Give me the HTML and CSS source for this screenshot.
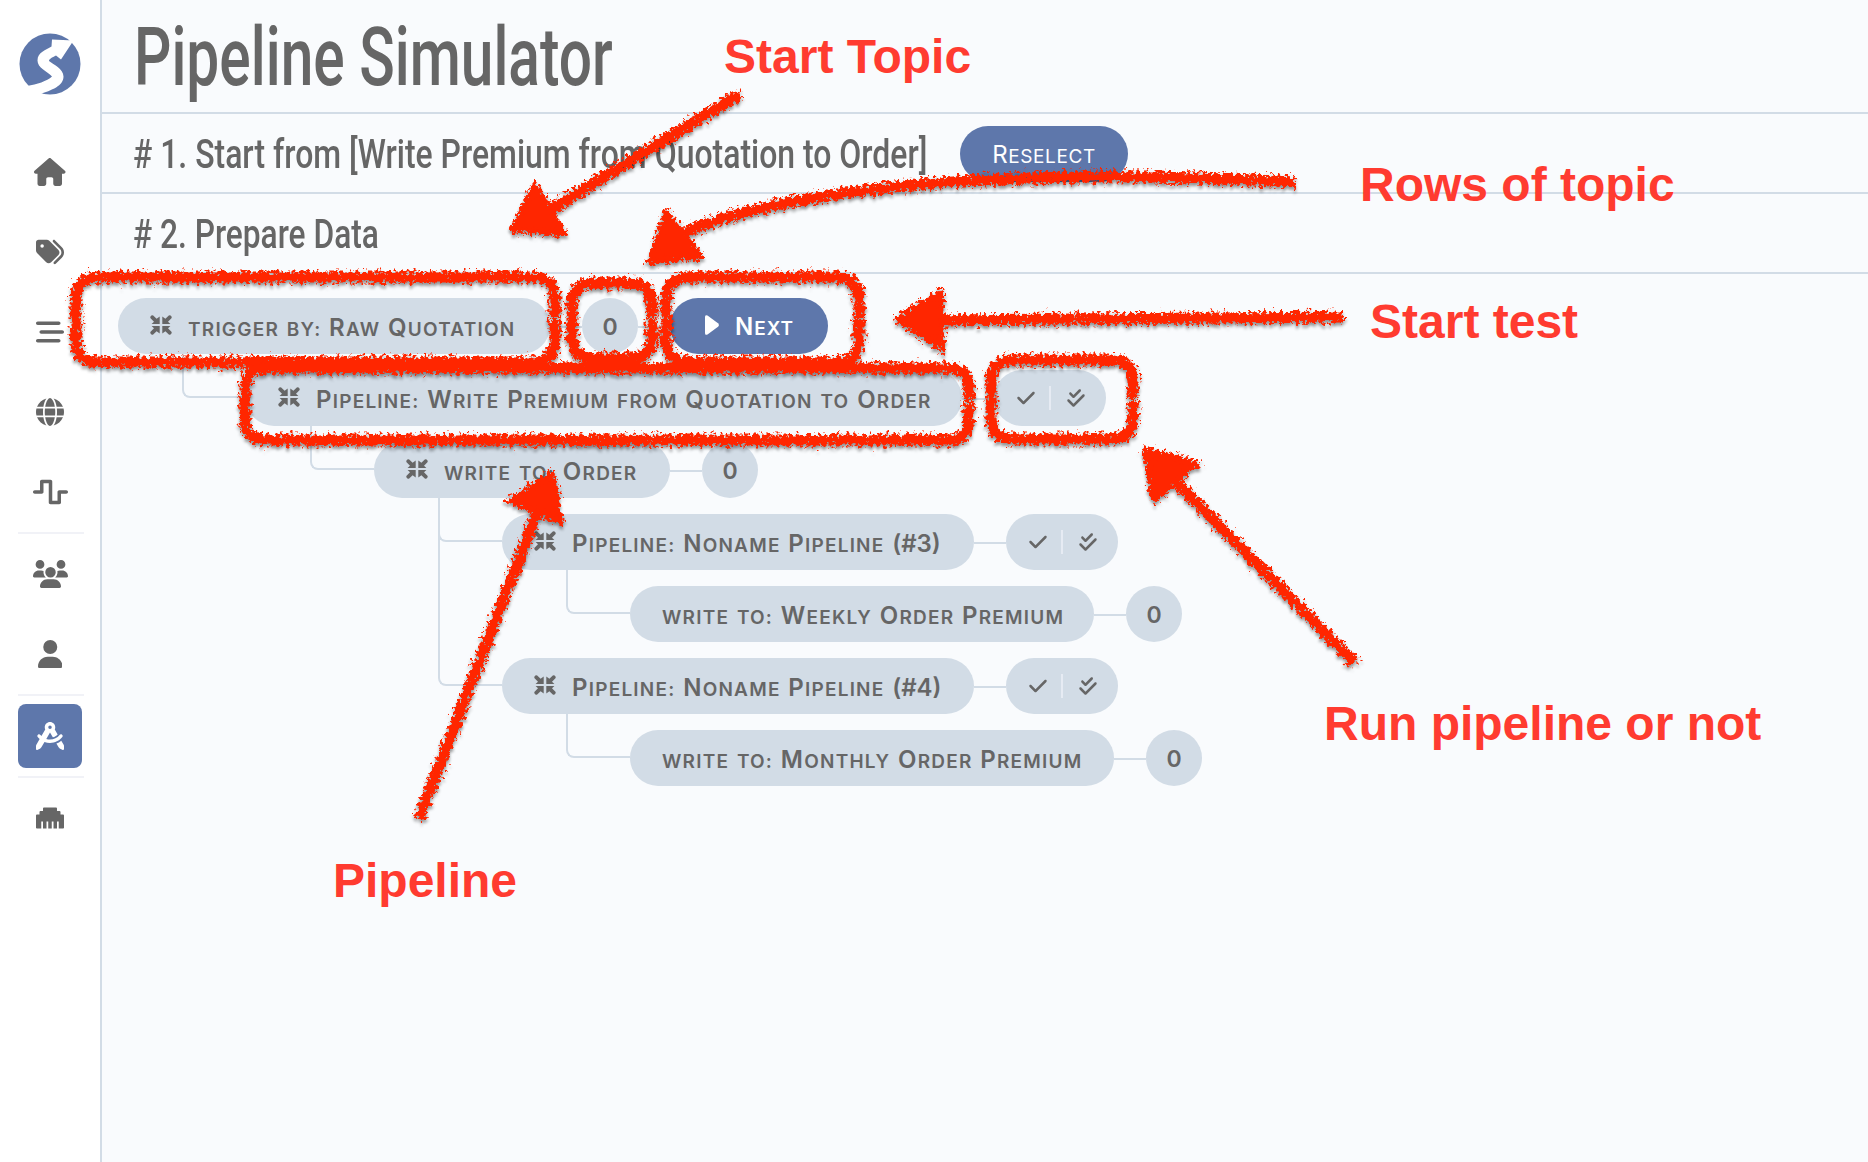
FILE: index.html
```html
<!DOCTYPE html>
<html lang="en">
<head>
<meta charset="utf-8">
<title>Pipeline Simulator</title>
<link rel="stylesheet" href="styles.css">
</head>
<body>
<svg class="defs" aria-hidden="true">
  <symbol id="collapse" viewBox="0 0 22 20">
    <path d="M9.7 1.500V9H1.600L4 6.700 0.800 3.600Q-0.200 2.500 0.700 1.200 1.800-0.200 3.200 0.600L6.600 3.700zM12.300 1.500V9H20.400L18 6.700 21.200 3.600Q22.200 2.500 21.300 1.200 20.200-0.200 18.800 0.600L15.400 3.700zM9.700 18.500V11H1.600L4 13.300 0.800 16.400Q-0.200 17.500 0.700 18.800 1.800 20.200 3.200 19.400L6.600 16.300zM12.300 18.500V11H20.400L18 13.300 21.200 16.400Q22.200 17.500 21.300 18.800 20.200 20.200 18.800 19.400L15.400 16.300z"/>
  </symbol>
  <symbol id="check" viewBox="0 0 448 512">
    <path d="M438.6 105.4c12.5 12.5 12.5 32.8 0 45.3l-256 256c-12.5 12.5-32.8 12.5-45.3 0l-128-128c-12.5-12.5-12.5-32.8 0-45.3s32.8-12.5 45.3 0L160 338.7 393.4 105.4c12.5-12.5 32.8-12.5 45.3 0z"/>
  </symbol>
  <symbol id="checks" viewBox="0 0 448 512">
    <path d="M342.6 86.6c12.5-12.5 12.5-32.8 0-45.3s-32.8-12.5-45.3 0L160 178.7l-57.4-57.4c-12.5-12.5-32.8-12.5-45.3 0s-12.5 32.8 0 45.3l80 80c12.5 12.5 32.8 12.5 45.3 0l160-160zm96 128c12.5-12.5 12.5-32.8 0-45.3s-32.8-12.5-45.3 0L160 402.7 54.6 297.4c-12.5-12.5-32.8-12.5-45.3 0s-12.5 32.8 0 45.3l128 128c12.5 12.5 32.8 12.5 45.3 0l256-256z"/>
  </symbol>
</svg>
<div class="app">
  <nav class="sidebar">
    <div class="logo">
      <svg width="62" height="62" viewBox="0 0 62 62"><circle class="disc" cx="31" cy="31" r="30.5"/><path class="swoosh" d="M33 6.500 54.500 7.500 42 26.500 37 22.500C33 24.500 30 26 30 28 34 31 44.500 36 44.500 43.500 44.500 53 33 57 20 61.500L4 62 8 53C18 51.500 28 48 33 43.500 28 38 18.500 35 18.500 27.500 18.500 19 27 17 32.500 13.500z"/></svg>
    </div>
    <ul class="menu">
      <li><svg class="fa" viewBox="0 0 576 512"><path d="M575.8 255.5c0 18-15 32.1-32 32.1h-32l.7 160.2c0 2.700-.2 5.400-.5 8.100V472c0 22.100-17.900 40-40 40H456c-1.100 0-2.200 0-3.300-.1c-1.400 .1-2.800 .1-4.200 .1H416 392c-22.100 0-40-17.900-40-40V448 384c0-17.700-14.300-32-32-32H256c-17.700 0-32 14.300-32 32v64 24c0 22.100-17.900 40-40 40H160 128.100c-1.500 0-3-.1-4.500-.2c-1.200 .1-2.400 .2-3.600 .2H104c-22.100 0-40-17.900-40-40V360c0-.9 0-1.900 .1-2.800V287.600H32c-18 0-32-14-32-32.100c0-9 3-17 10-24L266.400 8c7-7 15-8 22-8s15 2 21 7L564.800 231.500c8 7 12 15 11 24z"/></svg></li>
      <li><svg class="fa" viewBox="0 0 512 512"><path d="M345 39.1L472.8 168.4c52.4 53 52.4 138.2 0 191.2L360.8 472.9c-9.3 9.4-24.5 9.5-33.9 .2s-9.500-24.500-.2-33.900L438.600 325.900c33.900-34.300 33.900-89.400 0-123.700L310.900 72.900c-9.300-9.400-9.200-24.600 .2-33.900s24.600-9.200 33.900 .2zM0 229.500V80C0 53.500 21.500 32 48 32H197.500c17 0 33.300 6.700 45.300 18.700l168 168c25 25 25 65.500 0 90.500L277.300 442.700c-25 25-65.500 25-90.500 0l-168-168C6.700 262.700 0 246.500 0 229.500zM144 144a32 32 0 1 0 -64 0 32 32 0 1 0 64 0z"/></svg></li>
      <li><svg class="fa" viewBox="0 0 512 512"><path d="M0 96C0 78.300 14.300 64 32 64H416c17.700 0 32 14.300 32 32s-14.300 32-32 32H32C14.300 128 0 113.700 0 96zM64 256c0-17.700 14.300-32 32-32H480c17.700 0 32 14.300 32 32s-14.300 32-32 32H96c-17.700 0-32-14.300-32-32zM448 416c0 17.700-14.300 32-32 32H32c-17.700 0-32-14.300-32-32s14.300-32 32-32H416c17.700 0 32 14.300 32 32z"/></svg></li>
      <li><svg class="fa" viewBox="0 0 512 512"><path d="M352 256c0 22.2-1.2 43.6-3.3 64H163.3c-2.2-20.4-3.3-41.8-3.3-64s1.2-43.6 3.3-64H348.7c2.2 20.4 3.3 41.8 3.3 64zm28.8-64H503.9c5.3 20.5 8.1 41.9 8.1 64s-2.8 43.5-8.1 64H380.8c2.1-20.6 3.2-42 3.2-64s-1.1-43.4-3.2-64zm112.6-32H376.7c-10-63.9-29.8-117.4-55.3-151.6c78.3 20.7 142 77.5 171.9 151.6zm-149.1 0H167.7c6.1-36.4 15.5-68.6 27-94.7c10.5-23.6 22.2-40.7 33.5-51.5C239.4 3.2 248.7 0 256 0s16.6 3.2 27.8 13.8c11.3 10.8 23 27.9 33.5 51.5c11.6 26 20.9 58.2 27 94.7zm-209 0H18.6C48.6 85.9 112.2 29.1 190.6 8.4C165.1 42.6 145.3 96.1 135.3 160zM8.1 192H131.2c-2.1 20.6-3.2 42-3.2 64s1.1 43.4 3.2 64H8.1C2.8 299.5 0 278.1 0 256s2.8-43.5 8.1-64zM194.7 446.6c-11.6-26-20.9-58.2-27-94.6H344.3c-6.1 36.4-15.5 68.6-27 94.6c-10.5 23.6-22.2 40.7-33.5 51.5C272.6 508.8 263.3 512 256 512s-16.6-3.2-27.8-13.8c-11.3-10.8-23-27.9-33.5-51.5zM135.3 352c10 63.9 29.8 117.4 55.3 151.6C112.2 482.9 48.6 426.1 18.6 352H135.3zm358.1 0c-30 74.1-93.6 130.9-171.9 151.6c25.5-34.2 45.2-87.7 55.3-151.6H493.4z"/></svg></li>
      <li><svg class="fa" viewBox="0 0 640 512"><path d="M128 64c0-17.700 14.300-32 32-32H320c17.700 0 32 14.300 32 32V416h96V256c0-17.700 14.300-32 32-32H608c17.700 0 32 14.300 32 32s-14.300 32-32 32H512V448c0 17.700-14.300 32-32 32H320c-17.700 0-32-14.300-32-32V96H192V256c0 17.700-14.300 32-32 32H32c-17.700 0-32-14.300-32-32s14.300-32 32-32h96V64z"/></svg></li>
      <li class="rule"></li>
      <li><svg class="fa" viewBox="0 0 640 512"><path d="M128 0a80 80 0 1 1 0 160A80 80 0 1 1 128 0zM512 0a80 80 0 1 1 0 160A80 80 0 1 1 512 0zM0 298.700C0 239.800 47.800 192 106.700 192h42.700c15.900 0 31 3.500 44.600 9.700c-1.300 7.200-1.900 14.700-1.900 22.300c0 38.200 16.800 72.500 43.300 96c-.2 0-.4 0-.7 0H21.300C9.600 320 0 310.400 0 298.700zM405.300 320c-.2 0-.4 0-.7 0c26.600-23.500 43.300-57.800 43.300-96c0-7.600-.7-15-1.900-22.300c13.600-6.300 28.700-9.700 44.600-9.700h42.700C592.200 192 640 239.800 640 298.700c0 11.800-9.600 21.300-21.300 21.300H405.300zM224 224a96 96 0 1 1 192 0 96 96 0 1 1 -192 0zM128 485.300C128 411.700 187.700 352 261.300 352H378.700C452.300 352 512 411.700 512 485.300c0 14.700-11.900 26.700-26.700 26.700H154.700c-14.700 0-26.700-11.900-26.700-26.700z"/></svg></li>
      <li><svg class="fa" viewBox="0 0 448 512"><path d="M224 256A128 128 0 1 0 224 0a128 128 0 1 0 0 256zm-45.700 48C79.800 304 0 383.800 0 482.300C0 498.700 13.300 512 29.700 512H418.300c16.400 0 29.700-13.300 29.700-29.700C448 383.800 368.200 304 269.700 304H178.300z"/></svg></li>
      <li class="rule"></li>
      <li class="active"><svg class="fa" viewBox="0 0 512 512"><path d="M352 96c0 14.3-3.1 27.9-8.8 40.2L396 227.4c-23.7 25.3-54.2 44.1-88.5 53.6L256 192h0 0l-68 117.5c21.5 6.8 44.3 10.5 68.1 10.5c70.7 0 133.8-32.7 174.9-84c11.1-13.8 31.2-16 45-5s16 31.2 5 45C428.1 341.8 347 384 256 384c-35.4 0-69.4-6.4-100.7-18.1L98.7 463.7C94 471.8 87 478.4 78.6 482.6L23.2 510.3c-5 2.5-10.9 2.2-15.6-.7S0 501.5 0 496V440.6c0-8.4 2.2-16.7 6.5-24.1l60-103.7C53.7 301.6 41.8 289.3 31.2 276c-11.1-13.8-8.8-33.9 5-45s33.9-8.8 45 5c5.7 7.1 11.8 13.8 18.2 20.1l69.4-119.9c-5.6-12.2-8.8-25.8-8.8-40.2c0-53 43-96 96-96s96 43 96 96zm21 297.9c32.6-12.8 62.5-30.8 88.9-52.9l43.7 75.5c4.2 7.3 6.5 15.6 6.5 24.1V496c0 5.5-2.9 10.7-7.6 13.6s-10.6 3.2-15.6 .7l-55.4-27.7c-8.4-4.2-15.4-10.8-20.1-18.9L373 393.9zM256 128a32 32 0 1 0 0-64 32 32 0 1 0 0 64z"/></svg></li>
      <li class="rule"></li>
      <li><svg class="fa" viewBox="0 0 512 512"><path d="M496 192h-48v-48c0-8.800-7.200-16-16-16h-48V80c0-8.800-7.200-16-16-16H144c-8.800 0-16 7.200-16 16v48H80c-8.800 0-16 7.200-16 16v48H16c-8.800 0-16 7.200-16 16v224c0 8.800 7.200 16 16 16h80V320h32v128h64V320h32v128h64V320h32v128h64V320h32v128h80c8.800 0 16-7.200 16-16V208c0-8.800-7.200-16-16-16z"/></svg></li>
    </ul>
  </nav>
  <main class="main">
    <header class="title"><h1>Pipeline Simulator</h1></header>
    <section class="step start">
      <h2>#&nbsp;1. Start from [Write Premium from Quotation to Order]</h2>
      <button class="btn reselect"><span class="cap">Reselect</span></button>
    </section>
    <section class="step"><h2>#&nbsp;2. Prepare Data</h2></section>
    <ul class="tree">
      <li>
        <div class="row">
          <div class="node n1"><svg class="ico"><use href="#collapse"/></svg><span>trigger</span> <span>by:</span> <span class="cap">Raw</span> <span class="cap">Quotation</span></div>
          <i class="link"></i><div class="count">0</div><i class="link"></i>
          <button class="btn next"><svg class="play" width="14" height="20" viewBox="0 0 14 20"><path d="M0 2Q0-0.800 2.500 0.600L13 8.200Q14.800 10 13 11.800L2.500 19.400Q0 20.800 0 18z"/></svg><span class="cap">Next</span></button>
        </div>
        <ul>
          <li>
            <div class="row">
              <div class="node n2"><svg class="ico"><use href="#collapse"/></svg><span class="cap">Pipeline:</span> <span class="cap">Write</span> <span class="cap">Premium</span> <span>from</span> <span class="cap">Quotation</span> <span>to</span> <span class="cap">Order</span></div>
              <i class="link"></i><div class="run"><svg><use href="#check"/></svg><svg><use href="#checks"/></svg></div>
            </div>
            <ul>
              <li>
                <div class="row">
                  <div class="node n3"><svg class="ico"><use href="#collapse"/></svg><span>write</span> <span>to:</span> <span class="cap">Order</span></div>
                  <i class="link"></i><div class="count">0</div>
                </div>
                <ul>
                  <li>
                    <div class="row">
                      <div class="node n4"><svg class="ico"><use href="#collapse"/></svg><span class="cap">Pipeline:</span> <span class="cap">Noname</span> <span class="cap">Pipeline</span> <span class="full">(#3)</span></div>
                      <i class="link"></i><div class="run"><svg><use href="#check"/></svg><svg><use href="#checks"/></svg></div>
                    </div>
                    <ul>
                      <li>
                        <div class="row">
                          <div class="node n5"><span>write</span> <span>to:</span> <span class="cap">Weekly</span> <span class="cap">Order</span> <span class="cap">Premium</span></div>
                          <i class="link"></i><div class="count">0</div>
                        </div>
                      </li>
                    </ul>
                  </li>
                  <li>
                    <div class="row">
                      <div class="node n4"><svg class="ico"><use href="#collapse"/></svg><span class="cap">Pipeline:</span> <span class="cap">Noname</span> <span class="cap">Pipeline</span> <span class="full">(#4)</span></div>
                      <i class="link"></i><div class="run"><svg><use href="#check"/></svg><svg><use href="#checks"/></svg></div>
                    </div>
                    <ul>
                      <li>
                        <div class="row">
                          <div class="node n7"><span>write</span> <span>to:</span> <span class="cap">Monthly</span> <span class="cap">Order</span> <span class="cap">Premium</span></div>
                          <i class="link"></i><div class="count">0</div>
                        </div>
                      </li>
                    </ul>
                  </li>
                </ul>
              </li>
            </ul>
          </li>
        </ul>
      </li>
    </ul>
  </main>
</div>
<svg class="notes" width="1868" height="1162" viewBox="0 0 1868 1162">
  <defs>
    <filter id="chalk" filterUnits="userSpaceOnUse" x="0" y="0" width="1868" height="1162" color-interpolation-filters="sRGB">
      <feTurbulence type="fractalNoise" baseFrequency="0.3" numOctaves="3" seed="4" result="n"/>
      <feDisplacementMap in="SourceGraphic" in2="n" scale="14" xChannelSelector="R" yChannelSelector="G" result="d"/>
      <feDropShadow in="d" dx="0" dy="3" stdDeviation="1.500" flood-color="#000" flood-opacity="0.4"/>
    </filter>
  </defs>
  <g class="strokes" filter="url(#chalk)">
    <path d="M555 319V339Q555 362 532 362H99Q76 362 76 339V300Q76 277 99 277H532Q555 277 555 300V317"/>
    <path d="M652 319V337Q652 358 631 358H593Q572 358 572 337V304Q572 283 593 283H631Q652 283 652 304V317"/>
    <path d="M859 319V339Q859 362 836 362H689Q666 362 666 339V300Q666 277 689 277H836Q859 277 859 300V317"/>
    <path d="M969 402V419Q969 440 948 440H266Q245 440 245 419V389Q245 368 266 368H948Q969 368 969 389V400"/>
    <path d="M1133 400V418Q1133 439 1112 439H1012Q991 439 991 418V381Q991 360 1012 360H1112Q1133 360 1133 381V398"/>
    <path d="M740 94 548 211M1295 182C1080 170 830 175 684 232M1344 317 938 320M1355 663 1176 482M419 818 540 505"/>
    <g class="heads"><path d="M512 230 535 185 564 233z"/><path d="M649 262 666 212 701 256z"/><path d="M897 319 941 292 942 349z"/><path d="M1145 450 1197 463 1154 500z"/><path d="M552 473 510 501 561 522z"/></g>
  </g>
  <g class="captions">
    <text x="724" y="73">Start Topic</text>
    <text x="1360" y="201">Rows of topic</text>
    <text x="1370" y="338">Start test</text>
    <text x="1324" y="740">Run pipeline or not</text>
    <text x="333" y="897">Pipeline</text>
  </g>
</svg>
</body>
</html>
```
FILE: styles.css
```css
*, *::before, *::after { box-sizing: border-box; }
body { margin: 0; background: #f9fbfd; color: #666; font-family: Inter, "Noto Sans", sans-serif; }
ul { list-style: none; margin: 0; padding: 0; }
.defs { position: absolute; width: 0; height: 0; }
.app { display: flex; height: 1162px; overflow: hidden; }

.sidebar { flex: none; width: 102px; background: #fff; border-right: 2px solid #d2dce6; }
.logo { display: flex; height: 132px; padding: 33px 0 0 19px; }
.disc { fill: #5e77ab; }
.swoosh { fill: #fff; }
.menu { display: flex; flex-direction: column; }
.menu li { display: flex; align-items: center; justify-content: center; height: 64px; width: 64px; margin: 8px 18px; border-radius: 8px; }
.menu .rule { height: 2px; width: 66px; margin: 0 18px; border-radius: 0; background: #f1f2f7; }
.menu .active { background: #5e77ab; color: #fff; }
.fa { height: 28px; fill: currentColor; }

.main { flex: 1; min-width: 0; }
.title { height: 114px; padding-left: 32px; border-bottom: 2px solid #d2dce6; }
h1, h2 { margin: 0; font-family: Roboto, sans-serif; transform-origin: left center; white-space: nowrap; width: max-content; }
h1 { font-size: 81px; line-height: 116px; font-weight: 500; transform: scaleX(.724); }
.step { display: flex; align-items: center; height: 80px; padding: 2px 0 0 31px; border-bottom: 2px solid #d2dce6; }
h2 { font-size: 41px; line-height: 78px; font-weight: 500; transform: scaleX(.773); }
.start h2 { width: 827px; transform: scaleX(.779); }
.btn { border: 0; height: 56px; border-radius: 28px; background: #5e77ab; color: #fff; font: 400 19px Inter, sans-serif; letter-spacing: .6px; display: flex; align-items: center; justify-content: center; }
.reselect { width: 168px; }
.cap::first-letter { font-size: 24px; }

.tree { padding: 24px 0 0 16px; }
.tree ul { margin-left: 128px; padding-top: 16px; display: flex; flex-direction: column; gap: 16px; }
.tree ul > li { position: relative; }
.tree ul > li::before { content: ""; position: absolute; left: -64px; top: -16px; width: 64px; height: 44px; border: solid #d2dce6; border-width: 0 0 2px 2px; border-bottom-left-radius: 8px; }
.tree ul > li:not(:last-child)::after { content: ""; position: absolute; left: -64px; top: 0; bottom: 0; width: 2px; background: #d2dce6; }
.row { display: flex; align-items: center; height: 56px; }
.node, .count, .run { height: 56px; border-radius: 28px; background: #d2dce6; }
.node { display: flex; align-items: baseline; padding: 0 0 0 32px; line-height: 60px; font-size: 19px; font-weight: 600; letter-spacing: 1.22px; white-space: nowrap; }
.node span, .btn span { display: inline-block; text-transform: uppercase; }
.node span + span { margin-left: 7.7px; }
.node .full { font-size: 24px; letter-spacing: 0; }
.n1 { width: 432px; }
.n2 { width: 716px; }
.n3 { width: 296px; }
.n4 { width: 472px; }
.n5 { width: 464px; }
.n7 { width: 484px; }
.ico { width: 22px; height: 20px; margin-right: 16px; fill: #666; transform: translateY(-1px); }
.link { width: 32px; height: 2px; margin-top: 2px; background: #d2dce6; }
.count { width: 56px; text-align: center; line-height: 59px; font-size: 23px; font-weight: 600; }
.next { width: 158px; font-weight: 600; letter-spacing: 1px; padding-top: 2px; }
.play { margin: -3px 16px 0 1px; fill: #fff; }
.run { width: 112px; display: flex; align-items: center; justify-content: space-between; padding: 0 21px 0 23px; background: linear-gradient(#e6ebf3, #e6ebf3) center / 2px 24px no-repeat #d2dce6; }
.run svg { width: 18px; height: 20px; fill: #666; }

.notes { position: absolute; left: 0; top: 0; }
.strokes { fill: none; stroke: #ff2600; stroke-width: 11; stroke-linecap: butt; stroke-linejoin: round; }
.heads { fill: #ff2600; stroke-width: 6; }
.captions { fill: #ff3b30; font: bold 48px "Liberation Sans", sans-serif; }
```
